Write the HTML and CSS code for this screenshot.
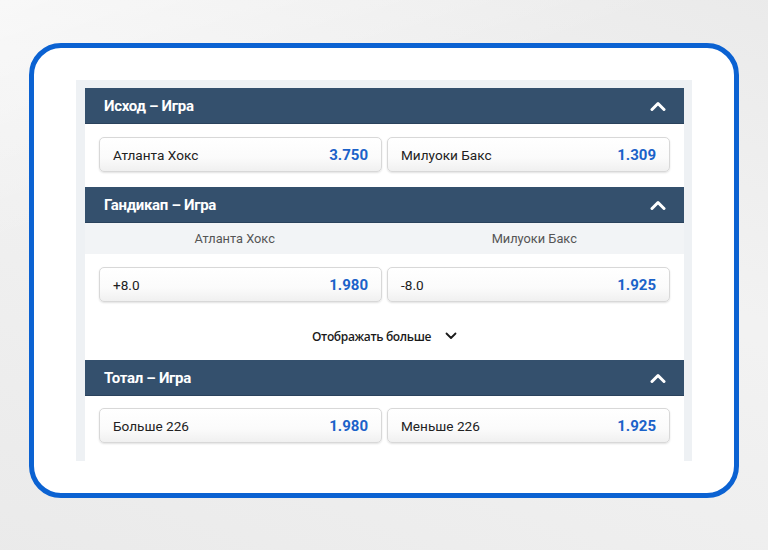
FILE: index.html
```html
<!DOCTYPE html>
<html lang="ru">
<head>
<meta charset="utf-8">
<link rel="stylesheet" href="styles.css">
</head>
<body>
<div class="frame">
  <div class="panel">
    <section class="market">
      <div class="market-head">
        <span class="market-title">Исход – Игра</span>
        <svg class="chev" width="16" height="10" viewBox="0 0 16 10"><path d="M2 8.5 L8 2.5 L14 8.5" fill="none" stroke="#fff" stroke-width="3" stroke-linecap="round" stroke-linejoin="round"/></svg>
      </div>
      <div class="market-body pad-a">
        <div class="odds-row">
          <div class="bet"><span class="bet-name">Атланта Хокс</span><span class="bet-odd">3.750</span></div>
          <div class="bet"><span class="bet-name">Милуоки Бакс</span><span class="bet-odd">1.309</span></div>
        </div>
      </div>
    </section>
    <section class="market">
      <div class="market-head">
        <span class="market-title">Гандикап – Игра</span>
        <svg class="chev" width="16" height="10" viewBox="0 0 16 10"><path d="M2 8.5 L8 2.5 L14 8.5" fill="none" stroke="#fff" stroke-width="3" stroke-linecap="round" stroke-linejoin="round"/></svg>
      </div>
      <div class="col-labels">
        <span>Атланта Хокс</span>
        <span>Милуоки Бакс</span>
      </div>
      <div class="market-body pad-b">
        <div class="odds-row">
          <div class="bet"><span class="bet-name">+8.0</span><span class="bet-odd">1.980</span></div>
          <div class="bet"><span class="bet-name">-8.0</span><span class="bet-odd">1.925</span></div>
        </div>
        <div class="show-more">
          <span>Отображать больше</span>
          <svg width="12" height="8" viewBox="0 0 12 8"><path d="M1.5 1.5 L6 6 L10.5 1.5" fill="none" stroke="#1a1a1a" stroke-width="1.8" stroke-linecap="round" stroke-linejoin="round"/></svg>
        </div>
      </div>
    </section>
    <section class="market">
      <div class="market-head">
        <span class="market-title">Тотал – Игра</span>
        <svg class="chev" width="16" height="10" viewBox="0 0 16 10"><path d="M2 8.5 L8 2.5 L14 8.5" fill="none" stroke="#fff" stroke-width="3" stroke-linecap="round" stroke-linejoin="round"/></svg>
      </div>
      <div class="market-body pad-c">
        <div class="odds-row">
          <div class="bet"><span class="bet-name">Больше 226</span><span class="bet-odd">1.980</span></div>
          <div class="bet"><span class="bet-name">Меньше 226</span><span class="bet-odd">1.925</span></div>
        </div>
      </div>
    </section>
  </div>
</div>
</body>
</html>
```

FILE: styles.css
```css
html, body {
  margin: 0;
  padding: 0;
}
body {
  width: 768px;
  height: 550px;
  overflow: hidden;
  background:
    linear-gradient(160deg, rgba(255,255,255,0.5) 0%, rgba(255,255,255,0) 30%),
    linear-gradient(20deg, rgba(0,0,0,0.02) 0%, rgba(255,255,255,0.2) 60%, rgba(0,0,0,0.02) 100%),
    #efefef;
  font-family: Roboto, "Liberation Sans", Arial, sans-serif;
  padding-top: 43px;
  box-sizing: border-box;
}
.frame {
  margin-left: 29px;
  width: 710px;
  height: 455px;
  box-sizing: border-box;
  border: 5px solid #0b62d2;
  border-radius: 32px;
  background: #fff;
  padding: 32px 42px;
}
.panel {
  height: 381px;
  overflow: hidden;
  background: #eef1f4;
  padding: 8px 8px 0 9px;
  box-sizing: border-box;
}
.market-head {
  height: 36px;
  background: #34506d;
  display: flex;
  align-items: center;
  justify-content: space-between;
  padding: 0 18px 0 19px;
  border-bottom: 1px solid #2a425c;
  box-sizing: border-box;
}
.market-title {
  color: #fff;
  font-weight: 700;
  font-size: 15px;
  letter-spacing: -0.3px;
}
.chev {
  display: block;
}
.market-body {
  background: #fff;
}
.pad-a {
  padding: 13px 14px 15px;
}
.pad-b {
  padding: 13px 14px 12px;
}
.pad-c {
  padding: 12px 14px 18px;
}
.odds-row {
  display: grid;
  grid-template-columns: 1fr 1fr;
  gap: 5px;
}
.bet {
  height: 35px;
  box-sizing: border-box;
  display: flex;
  align-items: center;
  justify-content: space-between;
  padding: 0 13px 0 13px;
  border: 1px solid #d8d8d8;
  border-radius: 5px;
  background: linear-gradient(#ffffff 0%, #fbfbfb 60%, #f0f0f0 100%);
  box-shadow: 0 1px 2px rgba(0,0,0,0.12);
}
.bet-name {
  color: #222;
  font-size: 13.6px;
}
.bet-odd {
  color: #1b62c9;
  font-weight: 700;
  font-size: 15px;
}
.col-labels {
  height: 31px;
  display: grid;
  grid-template-columns: 1fr 1fr;
  align-items: center;
  text-align: center;
  background: #f2f4f6;
  color: #555;
  font-size: 12.8px;
}
.show-more {
  height: 24px;
  margin-top: 22px;
  display: flex;
  align-items: center;
  justify-content: center;
  gap: 14px;
  font-family: "Open Sans", "Noto Sans", sans-serif;
  font-weight: 600;
  font-size: 12px;
  letter-spacing: -0.35px;
  color: #1a1a1a;
}
.show-more svg {
  display: block;
}
```
